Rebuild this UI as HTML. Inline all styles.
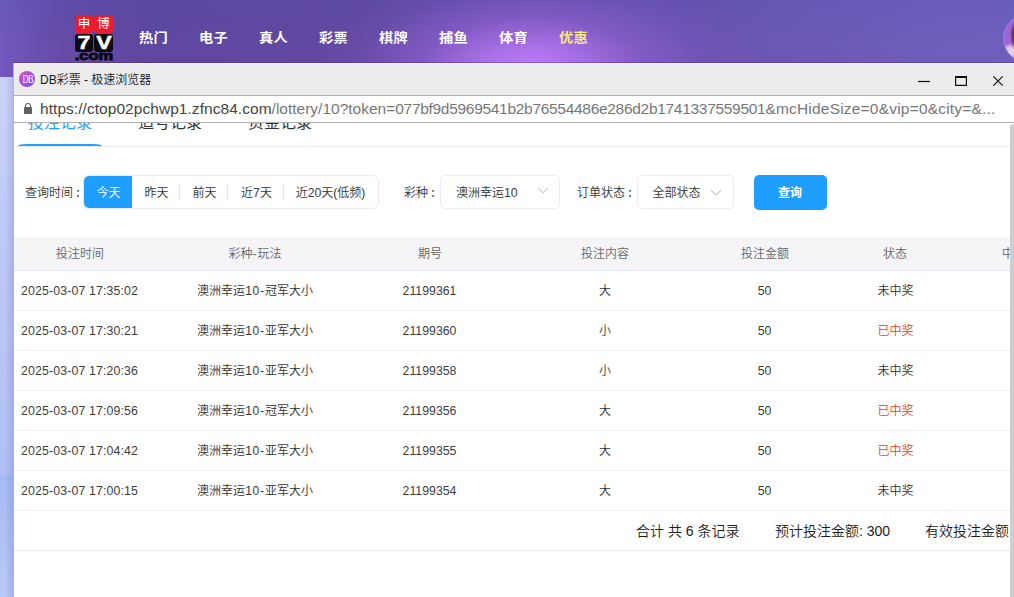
<!DOCTYPE html>
<html lang="zh-CN">
<head>
<meta charset="utf-8">
<title>DB彩票 - 极速浏览器</title>
<style>
*{box-sizing:border-box;margin:0;padding:0}
html,body{width:1014px;height:597px;overflow:hidden}
body{position:relative;font-family:"Liberation Sans","Noto Sans CJK SC",sans-serif;color:#333;background:#6a52b3}
.abs{position:absolute}
#bg{left:0;top:0;width:1014px;height:80px;background:
 radial-gradient(ellipse 215px 100px at 530px 68px,rgba(188,124,250,1) 0,rgba(180,118,242,.85) 22%,rgba(152,102,222,.5) 52%,rgba(128,92,204,.18) 80%,rgba(120,90,200,0) 100%),
 linear-gradient(180deg,rgba(60,80,175,.13),rgba(80,70,170,0) 55%,rgba(150,60,190,.1)),
 linear-gradient(90deg,#7059bd 0%,#644ca6 6%,#5e479f 14%,#62489f 35%,#6a4fab 60%,#6a57b2 75%,#6e5eba 92%,#6e5fbb 100%)}
#page{left:0;top:77px;width:14px;height:398px;background:linear-gradient(90deg,rgba(70,80,150,0) 35%,rgba(70,80,150,.2) 100%),linear-gradient(180deg,#cbd3fa,#c0c8f6 40%,#b1c0f4)}
#page2{left:0;top:475px;width:14px;height:122px;background:linear-gradient(90deg,rgba(60,80,150,0) 35%,rgba(60,80,150,.2) 100%),linear-gradient(180deg,#a5bbf4,#b9c9f8)}
.nav{top:27px;height:20px;line-height:20px;font-size:14.2px;letter-spacing:.3px;font-weight:bold;transform:scaleY(.9);color:#fff;white-space:nowrap}
#logo .r{background:#ec1c2e;border-radius:3.5px;color:#fff;font-size:12.5px;font-weight:400;text-align:center;line-height:18px;width:18px;height:18px;top:15px}
#logo .k{background:#0b0b10;border-radius:3px;width:18px;height:18px;top:34px;overflow:hidden}
#logo .k span{position:absolute;left:50%;top:-1px;-webkit-text-stroke:.5px #fff;color:#fff;font-size:19px;font-weight:bold;line-height:19px;transform:translateX(-50%) scaleX(1.22);white-space:nowrap}
#com{left:75px;top:48.5px;width:38px;height:15px;font-size:12.2px;font-weight:bold;color:#0b0b10;line-height:15px;text-align:center;white-space:nowrap;transform:scaleX(1.35);-webkit-text-stroke:.9px #0b0b10}
#win{left:13px;top:63px;width:1001px;height:534px;background:#fff;border-left:1px solid #b6b6b8;box-shadow:0 -1px 0 0 rgba(70,40,130,.4)}
#tbar{left:0;top:0;width:1000px;height:32px;background:#ececec;border-top:1px solid #f1f1ef}
#ubar{left:0;top:32px;width:1000px;height:28px;background:#fff;border-top:1px solid #b0b0b0;border-bottom:1px solid #b0b0b0}
#title{left:26px;top:7px;font-size:12px;line-height:18px;color:#1a1a1a;white-space:nowrap;font-weight:350}
#url{left:26px;top:36px;font-size:15.5px;line-height:20px;color:#777;white-space:nowrap;letter-spacing:.1px}
#url b{font-weight:normal;color:#444;letter-spacing:.05px}
#url i{font-style:normal}
.u1{letter-spacing:0}.u2{letter-spacing:-.3px}.u3{letter-spacing:.2px}
#content{left:0;top:60px;width:1000px;height:474px;overflow:hidden;background:#fff}
.tab{top:-10px;font-size:16px;line-height:20px;color:#333;white-space:nowrap}
.t12{font-size:12px;line-height:16px;white-space:nowrap;color:#333;font-weight:350}
.cl{margin-left:3px;font-weight:bold;color:#555}
.c{transform:translateX(-50%)}
.n{font-size:12.3px;color:#3c3c3c}
.d{font-size:12.3px;letter-spacing:.15px;color:#3c3c3c}
.l{letter-spacing:.8px}
#grp{left:69px;top:52px;width:296px;height:34px;border:1px solid #ececf0;border-radius:6px}
.sel{top:52px;height:34px;border:1px solid #ececf2;border-radius:5px}
.sep{top:61px;width:1px;height:16px;background:#e2e2e2}
.hl{left:0;width:996px;height:1px;background:#ebedf2}
.th{color:#666}
.t14{font-size:14px;line-height:18px;white-space:nowrap;color:#1c1c1c;font-weight:350}
.red{color:#f0352b}
#sb{left:996px;top:1px;width:6px;height:474px;background:#cecece;border-top-left-radius:3px}
</style>
</head>
<body>
<div id="bg" class="abs"></div>
<div id="page" class="abs"></div>
<div id="page2" class="abs"></div>

<div id="logo">
 <div class="abs r" style="left:75px">申</div>
 <div class="abs r" style="left:94px;width:19px">博</div>
 <div class="abs k" style="left:75px"><span>7</span></div>
 <div class="abs k" style="left:94px;width:19px"><span>V</span></div>
 <div id="com" class="abs">.com</div>
</div>
<div class="abs nav" style="left:139px">热门</div>
<div class="abs nav" style="left:199px">电子</div>
<div class="abs nav" style="left:259px">真人</div>
<div class="abs nav" style="left:319px">彩票</div>
<div class="abs nav" style="left:379px">棋牌</div>
<div class="abs nav" style="left:439px">捕鱼</div>
<div class="abs nav" style="left:499px">体育</div>
<div class="abs nav" style="left:559px;color:#f7e87b">优惠</div>
<div class="abs" style="left:1003px;top:13.5px;width:49px;height:49px;border-radius:50%;border:1.5px solid #7d8ef2;background:
 radial-gradient(ellipse 5px 14px at 11px 20px,#4b3b52 0,#5a4560 60%,rgba(90,69,96,0) 100%),
 radial-gradient(ellipse 9px 9px at 6px 37px,#ecd9ea 0,#dcc0de 55%,rgba(200,150,210,0) 100%),
 radial-gradient(ellipse 6px 5px at 11px 42px,#e05a8a 0,rgba(224,90,138,0) 100%),
 #a561da"></div>

<div id="win" class="abs">
 <div id="tbar" class="abs">
  <svg class="abs" style="left:5px;top:7px" width="16" height="16" viewBox="0 0 16 16">
   <defs><linearGradient id="g1" x1="0" y1="0" x2="1" y2="1"><stop offset="0" stop-color="#e04bd0"/><stop offset="1" stop-color="#6f4fe8"/></linearGradient></defs>
   <circle cx="8" cy="8" r="8" fill="url(#g1)"/>
   <text x="14.2" y="12.4" transform="scale(.62 1)" font-family="Liberation Serif,serif" font-size="13.5" fill="#fff" text-anchor="middle" letter-spacing="-1">DB</text>
  </svg>
  <div id="title" class="abs">DB彩票 - 极速浏览器</div>
  <svg class="abs" style="left:900px;top:7px" width="100" height="20" viewBox="0 0 100 20">
   <path d="M4 10.5H16" stroke="#111" stroke-width="1.2" fill="none"/>
   <path d="M41.6 5.6H52.4V14.4H41.6Z" stroke="#111" stroke-width="1.2" fill="none"/><path d="M41 6H53" stroke="#111" stroke-width="2" fill="none"/>
   <path d="M79.3 5.3L88.7 14.7M88.7 5.3L79.3 14.7" stroke="#111" stroke-width="1.2" fill="none"/>
  </svg>
 </div>
 <div id="ubar" class="abs"></div>
 <svg class="abs" style="left:8px;top:39px" width="12" height="13" viewBox="0 0 12 13">
  <path d="M3.5 5.5V4a2.5 2.5 0 0 1 5 0V5.5" stroke="#606165" stroke-width="1.05" fill="none"/>
  <rect x="2" y="5" width="8" height="6.9" rx=".4" fill="#606165"/>
 </svg>
 <div id="url" class="abs"><b>https://ctop02pchwp1.zfnc84.com</b><i class="u1">/lottery/10?token=</i><i class="u2">077bf9d5969541b2b76554486e286d2b1741337559501</i><i class="u3">&amp;mcHideSize=0&amp;vip=0&amp;city=&amp;...</i></div>

 <div id="content" class="abs">
  <div class="abs tab" style="left:14px;color:#1e9fff">投注记录</div>
  <div class="abs tab" style="left:124px">追号记录</div>
  <div class="abs tab" style="left:234px">资金记录</div>
  <div class="abs" style="left:4px;top:21px;width:84px;height:2px;background:#1e9fff;border-radius:9px 9px 0 0/2px 2px 0 0"></div>
  <div class="abs hl" style="top:23px;background:#ececec"></div>
  <div class="abs t12" style="left:11px;top:62px">查询时间<span class="cl">:</span></div>
  <div id="grp" class="abs"></div>
  <div class="abs" style="left:70px;top:53px;width:48px;height:32px;background:#1e9fff;border-radius:5px 0 0 5px"></div>
  <div class="abs t12 c" style="left:94.5px;top:62px;color:#fff">今天</div>
  <div class="abs t12 c" style="left:142.5px;top:62px">昨天</div>
  <div class="abs t12 c" style="left:190.5px;top:62px">前天</div>
  <div class="abs t12 c" style="left:242.5px;top:62px">近<span class="n">7</span>天</div>
  <div class="abs t12 c" style="left:316.5px;top:62px">近<span class="n">20</span>天(低频)</div>
  <div class="abs sep" style="left:165px"></div>
  <div class="abs sep" style="left:213px"></div>
  <div class="abs sep" style="left:269px"></div>
  <div class="abs t12" style="left:390px;top:62px">彩种<span class="cl">:</span></div>
  <div class="abs sel" style="left:426px;width:120px"></div>
  <div class="abs t12" style="left:442px;top:62px">澳洲幸运<span class="n">10</span></div>
  <svg class="abs" style="left:523px;top:64px" width="12" height="8" viewBox="0 0 12 8"><path d="M1.3 1.2L6 5.8L10.7 1.2" stroke="#c6cbd6" stroke-width="1.1" fill="none"/></svg>
  <div class="abs t12" style="left:563px;top:62px">订单状态<span class="cl">:</span></div>
  <div class="abs sel" style="left:623px;width:97px"></div>
  <div class="abs t12" style="left:638.5px;top:62px">全部状态</div>
  <svg class="abs" style="left:696px;top:66px" width="12" height="8" viewBox="0 0 12 8"><path d="M1 1.2L6 6L11 1.2" stroke="#bfc3cc" stroke-width="1.1" fill="none"/></svg>
  <div class="abs" style="left:740px;top:52px;width:73px;height:35px;background:#1e9fff;border-radius:5px"></div>
  <div class="abs t12 c" style="left:776px;top:62px;color:#fff;font-weight:bold">查询</div>

  <div class="abs" style="left:0;top:114px;width:996px;height:33px;background:#f5f5f8"></div>
  <div class="abs t12 c th" style="left:66px;top:123px">投注时间</div>
  <div class="abs t12 c th" style="left:241px;top:123px">彩种<span class="l">-</span>玩法</div>
  <div class="abs t12 c th" style="left:416px;top:123px">期号</div>
  <div class="abs t12 c th" style="left:591px;top:123px">投注内容</div>
  <div class="abs t12 c th" style="left:751px;top:123px">投注金额</div>
  <div class="abs t12 c th" style="left:881px;top:123px">状态</div>
  <div class="abs t12 th" style="left:988px;top:123px">中奖金额</div>
  <div class="abs hl" style="top:147px;background:#e7ebf4"></div>
  <div class="abs hl" style="top:187px"></div>
  <div class="abs hl" style="top:227px"></div>
  <div class="abs hl" style="top:267px"></div>
  <div class="abs hl" style="top:307px"></div>
  <div class="abs hl" style="top:347px"></div>
  <div class="abs hl" style="top:387px"></div>
  <div class="abs hl" style="top:427px;background:#e6e9f2"></div>

  <div class="abs t12 d" style="left:7px;top:160px">2025-03-07 17:35:02</div>
  <div class="abs t12 c" style="left:241px;top:160px">澳洲幸运<span class="l">10-</span>冠军大小</div>
  <div class="abs t12 c n" style="left:415.5px;top:160px">21199361</div>
  <div class="abs t12 c" style="left:591px;top:160px">大</div>
  <div class="abs t12 c n" style="left:750.5px;top:160px">50</div>
  <div class="abs t12 c" style="left:881.5px;top:160px">未中奖</div>

  <div class="abs t12 d" style="left:7px;top:200px">2025-03-07 17:30:21</div>
  <div class="abs t12 c" style="left:241px;top:200px">澳洲幸运<span class="l">10-</span>亚军大小</div>
  <div class="abs t12 c n" style="left:415.5px;top:200px">21199360</div>
  <div class="abs t12 c" style="left:591px;top:200px">小</div>
  <div class="abs t12 c n" style="left:750.5px;top:200px">50</div>
  <div class="abs t12 c red" style="left:881.5px;top:200px">已中奖</div>

  <div class="abs t12 d" style="left:7px;top:240px">2025-03-07 17:20:36</div>
  <div class="abs t12 c" style="left:241px;top:240px">澳洲幸运<span class="l">10-</span>亚军大小</div>
  <div class="abs t12 c n" style="left:415.5px;top:240px">21199358</div>
  <div class="abs t12 c" style="left:591px;top:240px">小</div>
  <div class="abs t12 c n" style="left:750.5px;top:240px">50</div>
  <div class="abs t12 c" style="left:881.5px;top:240px">未中奖</div>

  <div class="abs t12 d" style="left:7px;top:280px">2025-03-07 17:09:56</div>
  <div class="abs t12 c" style="left:241px;top:280px">澳洲幸运<span class="l">10-</span>冠军大小</div>
  <div class="abs t12 c n" style="left:415.5px;top:280px">21199356</div>
  <div class="abs t12 c" style="left:591px;top:280px">大</div>
  <div class="abs t12 c n" style="left:750.5px;top:280px">50</div>
  <div class="abs t12 c red" style="left:881.5px;top:280px">已中奖</div>

  <div class="abs t12 d" style="left:7px;top:320px">2025-03-07 17:04:42</div>
  <div class="abs t12 c" style="left:241px;top:320px">澳洲幸运<span class="l">10-</span>亚军大小</div>
  <div class="abs t12 c n" style="left:415.5px;top:320px">21199355</div>
  <div class="abs t12 c" style="left:591px;top:320px">大</div>
  <div class="abs t12 c n" style="left:750.5px;top:320px">50</div>
  <div class="abs t12 c red" style="left:881.5px;top:320px">已中奖</div>

  <div class="abs t12 d" style="left:7px;top:360px">2025-03-07 17:00:15</div>
  <div class="abs t12 c" style="left:241px;top:360px">澳洲幸运<span class="l">10-</span>亚军大小</div>
  <div class="abs t12 c n" style="left:415.5px;top:360px">21199354</div>
  <div class="abs t12 c" style="left:591px;top:360px">大</div>
  <div class="abs t12 c n" style="left:750.5px;top:360px">50</div>
  <div class="abs t12 c" style="left:881.5px;top:360px">未中奖</div>

  <div class="abs t14" style="left:622px;top:399px">合计 共 6 条记录</div>
  <div class="abs t14" style="left:761px;top:399px">预计投注金额: 300</div>
  <div class="abs t14" style="left:911px;top:399px">有效投注金额: 300</div>

  <div id="sb" class="abs"></div>
 </div>
</div>
</body>
</html>
